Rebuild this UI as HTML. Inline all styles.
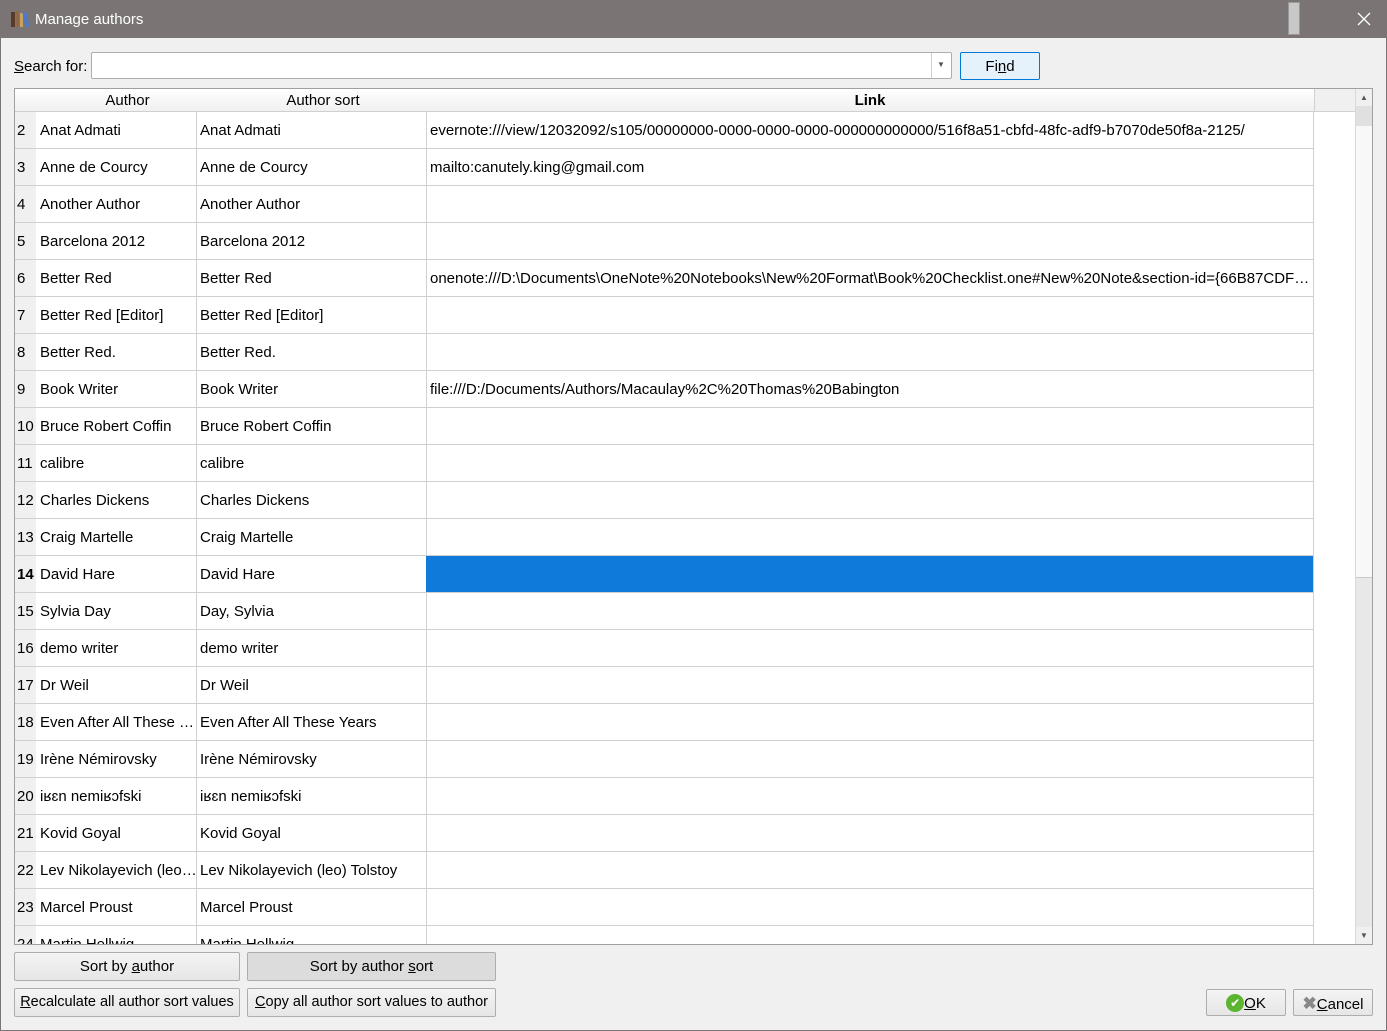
<!DOCTYPE html>
<html><head><meta charset="utf-8"><style>
*{box-sizing:border-box;margin:0;padding:0}
body{width:1387px;height:1031px;background:#f0f0f0;font-family:"Liberation Sans",sans-serif;font-size:15px;color:#000;position:relative;overflow:hidden}
.abs{position:absolute}
#title{left:0;top:0;width:1387px;height:38px;background:#7a7574;color:#fff;font-size:15px}
#frame{left:0;top:38px;width:1387px;height:993px;border:1px solid #7a7574;border-top:none}
.btn{position:absolute;background:linear-gradient(#f4f4f4,#e6e6e6);border:1px solid #adadad;border-radius:2px;text-align:center;line-height:27px;font-size:15px}
#table{left:14px;top:88px;width:1359px;height:857px;border:1px solid #a0a0a0;background:#fff;overflow:hidden}
.hd{position:absolute;top:0;height:23px;line-height:23px;text-align:center;background:linear-gradient(#fff,#f0f0f0);border-right:1px solid #d0d0d0;border-bottom:1px solid #d0d0d0}
.row{position:absolute;left:0;height:37px;width:1300px}
.c{position:absolute;top:0;height:37px;line-height:37px;border-right:1px solid #d0d0d0;border-bottom:1px solid #d0d0d0;white-space:nowrap;overflow:hidden;padding-left:4px}
.n{left:0;width:21px;background:#f0f0f0;padding-left:2px;border-right:none}
.a{left:21px;width:161px}
.s{left:181px;width:231px}
.l{left:411px;width:888px}
u{text-decoration:underline}
</style></head><body>
<div id="title" class="abs">
<svg class="abs" style="left:10px;top:10px" width="20" height="18"><rect x="1" y="2" width="4" height="15" fill="#5a3b2a"/><rect x="6" y="1" width="3" height="16" fill="#8a6a4a"/><rect x="10" y="3" width="3" height="14" fill="#c8a060"/><rect x="14" y="2" width="4" height="15" fill="#4a7ac8" transform="rotate(-12 16 10)"/></svg>
<div class="abs" style="left:35px;top:11px">Manage authors</div>
<div class="abs" style="left:1288px;top:2px;width:12px;height:33px;background:#c8c8c8;border:1px solid #999"></div>
<svg class="abs" style="left:1357px;top:12px" width="14" height="14"><path d="M1 1L13 13M13 1L1 13" stroke="#fff" stroke-width="1.3"/></svg>
</div>
<div id="frame" class="abs"></div>
<div class="abs" style="left:14px;top:58px"><u>S</u>earch for:</div>
<div class="abs" style="left:91px;top:52px;width:861px;height:27px;background:#fff;border:1px solid #adadad;border-radius:2px"></div>
<div class="abs" style="left:931px;top:53px;width:1px;height:25px;background:#d0d0d0"></div>
<div class="abs" style="left:937px;top:60px;font-size:8px;color:#555">▼</div>
<div class="btn" style="left:960px;top:52px;width:80px;height:28px;background:#e5f1fb;border-color:#0078d7">Fi<u>n</u>d</div>
<div id="table" class="abs">
<div class="hd" style="left:0;width:182px;padding-left:44px">Author</div>
<div class="hd" style="left:181px;width:231px;padding-left:24px">Author sort</div>
<div class="hd" style="left:411px;width:889px;font-weight:bold">Link</div>
<div class="hd" style="left:1300px;width:40px;border-right:none;background:#f0f0f0"></div>
<div class="abs" style="left:0;top:23px;width:1340px;height:834px;overflow:hidden">
<div class="row" style="top:0"><div class="c n">2</div><div class="c a">Anat Admati</div><div class="c s">Anat Admati</div><div class="c l">evernote:///view/12032092/s105/00000000-0000-0000-0000-000000000000/516f8a51-cbfd-48fc-adf9-b7070de50f8a-2125/</div></div>
<div class="row" style="top:37px"><div class="c n">3</div><div class="c a">Anne de Courcy</div><div class="c s">Anne de Courcy</div><div class="c l">mailto:canutely.king@gmail.com</div></div>
<div class="row" style="top:74px"><div class="c n">4</div><div class="c a">Another Author</div><div class="c s">Another Author</div><div class="c l"></div></div>
<div class="row" style="top:111px"><div class="c n">5</div><div class="c a">Barcelona 2012</div><div class="c s">Barcelona 2012</div><div class="c l"></div></div>
<div class="row" style="top:148px"><div class="c n">6</div><div class="c a">Better Red</div><div class="c s">Better Red</div><div class="c l">onenote:///D:\Documents\OneNote%20Notebooks\New%20Format\Book%20Checklist.one#New%20Note&amp;section-id={66B87CDF…</div></div>
<div class="row" style="top:185px"><div class="c n">7</div><div class="c a">Better Red [Editor]</div><div class="c s">Better Red [Editor]</div><div class="c l"></div></div>
<div class="row" style="top:222px"><div class="c n">8</div><div class="c a">Better Red.</div><div class="c s">Better Red.</div><div class="c l"></div></div>
<div class="row" style="top:259px"><div class="c n">9</div><div class="c a">Book Writer</div><div class="c s">Book Writer</div><div class="c l">file:///D:/Documents/Authors/Macaulay%2C%20Thomas%20Babington</div></div>
<div class="row" style="top:296px"><div class="c n">10</div><div class="c a">Bruce Robert Coffin</div><div class="c s">Bruce Robert Coffin</div><div class="c l"></div></div>
<div class="row" style="top:333px"><div class="c n">11</div><div class="c a">calibre</div><div class="c s">calibre</div><div class="c l"></div></div>
<div class="row" style="top:370px"><div class="c n">12</div><div class="c a">Charles Dickens</div><div class="c s">Charles Dickens</div><div class="c l"></div></div>
<div class="row" style="top:407px"><div class="c n">13</div><div class="c a">Craig Martelle</div><div class="c s">Craig Martelle</div><div class="c l"></div></div>
<div class="row" style="top:444px"><div class="c n" style="font-weight:bold">14</div><div class="c a">David Hare</div><div class="c s">David Hare</div><div class="c l" style="background:#0f7ad9"></div></div>
<div class="row" style="top:481px"><div class="c n">15</div><div class="c a">Sylvia Day</div><div class="c s">Day, Sylvia</div><div class="c l"></div></div>
<div class="row" style="top:518px"><div class="c n">16</div><div class="c a">demo writer</div><div class="c s">demo writer</div><div class="c l"></div></div>
<div class="row" style="top:555px"><div class="c n">17</div><div class="c a">Dr Weil</div><div class="c s">Dr Weil</div><div class="c l"></div></div>
<div class="row" style="top:592px"><div class="c n">18</div><div class="c a">Even After All These …</div><div class="c s">Even After All These Years</div><div class="c l"></div></div>
<div class="row" style="top:629px"><div class="c n">19</div><div class="c a">Irène Némirovsky</div><div class="c s">Irène Némirovsky</div><div class="c l"></div></div>
<div class="row" style="top:666px"><div class="c n">20</div><div class="c a">iʁɛn nemiʁɔfski</div><div class="c s">iʁɛn nemiʁɔfski</div><div class="c l"></div></div>
<div class="row" style="top:703px"><div class="c n">21</div><div class="c a">Kovid Goyal</div><div class="c s">Kovid Goyal</div><div class="c l"></div></div>
<div class="row" style="top:740px"><div class="c n">22</div><div class="c a">Lev Nikolayevich (leo…</div><div class="c s">Lev Nikolayevich (leo) Tolstoy</div><div class="c l"></div></div>
<div class="row" style="top:777px"><div class="c n">23</div><div class="c a">Marcel Proust</div><div class="c s">Marcel Proust</div><div class="c l"></div></div>
<div class="row" style="top:814px"><div class="c n">24</div><div class="c a">Martin Hellwig</div><div class="c s">Martin Hellwig</div><div class="c l"></div></div>
</div>
<div class="abs" style="left:1340px;top:0;width:17px;height:855px;background:#e8e8e8;border-left:1px solid #d8d8d8">
<div class="abs" style="left:0;top:0;width:16px;height:17px;background:#f0f0f0;text-align:center;font-size:8px;line-height:17px;color:#555">▲</div>
<div class="abs" style="left:0;top:17px;width:16px;height:20px;background:#e0e0e0"></div>
<div class="abs" style="left:0;top:37px;width:16px;height:452px;background:#f8f8f8;border-bottom:1px solid #c8c8c8"></div>
<div class="abs" style="left:0;top:838px;width:16px;height:17px;background:#f0f0f0;text-align:center;font-size:8px;line-height:17px;color:#555">▼</div>
</div>
</div>
<div class="btn" style="left:14px;top:952px;width:226px;height:29px">Sort by <u>a</u>uthor</div>
<div class="btn" style="left:247px;top:952px;width:249px;height:29px;background:#dcdcdc">Sort by author <u>s</u>ort</div>
<div class="btn" style="left:14px;top:988px;width:226px;height:29px;font-size:14.5px"><u>R</u>ecalculate all author sort values</div>
<div class="btn" style="left:247px;top:988px;width:249px;height:29px;font-size:14.5px"><u>C</u>opy all author sort values to author</div>
<div class="btn" style="left:1206px;top:989px;width:80px;height:27px"><span style="display:inline-block;width:18px;height:18px;border-radius:50%;background:#5cb531;color:#fff;font-size:12px;line-height:18px;vertical-align:middle;margin-top:-3px">✔</span><u>O</u>K</div>
<div class="btn" style="left:1293px;top:989px;width:80px;height:27px"><span style="color:#888;font-weight:bold;font-size:17px">✖</span><u>C</u>ancel</div>
</body></html>
